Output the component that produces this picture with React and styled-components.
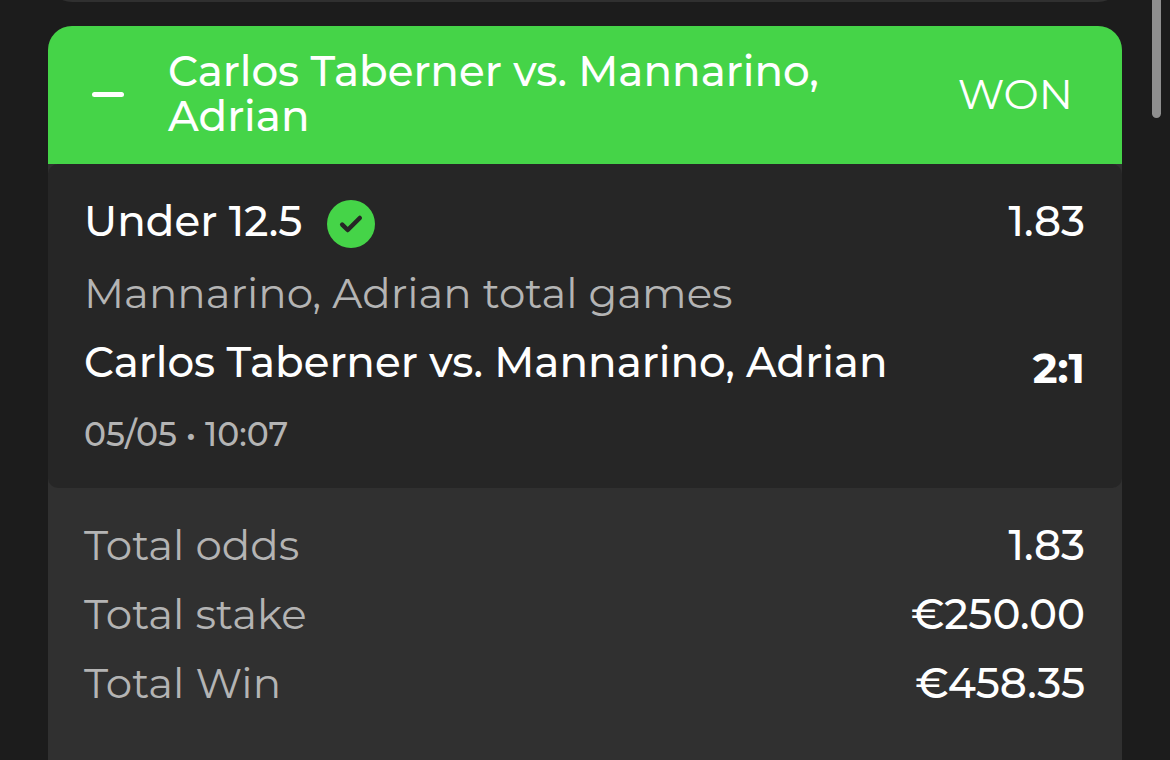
import React from "react";
import styled, { createGlobalStyle } from "styled-components";

const GlobalStyle = createGlobalStyle`
  * { box-sizing: border-box; }
  body {
    margin: 0;
    background: #1c1c1c;
    color: #fff;
    font-family: Montserrat, Inter, sans-serif;
  }
`;

const Screen = styled.main`
  position: relative;
  height: 760px;
  padding: 0 48px;
  overflow: hidden;
  background: #1c1c1c;
`;

const PreviousCard = styled.div`
  height: 24px;
  margin-top: -22px;
  border-radius: 0 0 24px 24px;
  background: #303030;
`;

const Scrollbar = styled.div`
  position: absolute;
  top: -12px;
  right: 9px;
  width: 9px;
  height: 130px;
  border-radius: 5px;
  background: #8f8f8f;
`;

const Card = styled.section`
  width: 1074px;
  height: 760px;
  margin-top: 24px;
  border-radius: 24px 24px 0 0;
  overflow: hidden;
  background: #303030;
`;

const Header = styled.header`
  display: flex;
  align-items: center;
  height: 138px;
  padding: 0 49px 3px 44px;
  background: #45d448;
`;

const Dash = styled.span`
  width: 32px;
  height: 5px;
  margin: 2px 44px 0 0;
  border-radius: 2.5px;
  background: #fff;
`;

const Text = styled.span`
  display: block;
  font-size: ${(p) => p.$size || 42}px;
  font-weight: ${(p) => p.$weight || 500};
  line-height: ${(p) => p.$line || 48}px;
  color: ${(p) => (p.$muted ? "#b4b4b4" : "#fff")};
  white-space: nowrap;
`;

const Title = styled.h1`
  flex: 1;
  margin: 0;
`;

const Selection = styled.div`
  height: 324px;
  padding: 33px 37px 0 36px;
  border-radius: 10px;
  background: #262626;
`;

const Line = styled.div`
  display: flex;
  align-items: flex-start;
  justify-content: space-between;
  margin-top: ${(p) => p.$gap || 0}px;
`;

const Pick = styled.div`
  display: flex;
  gap: 25px;
`;

const Badge = styled.svg`
  width: 48px;
  height: 48px;
  margin-top: 3px;
`;

const Score = styled.div`
  padding-top: 6px;
  margin-bottom: -6px;
`;

const Totals = styled.div`
  padding: 23px 37px 0 36px;
`;

const totals = [
  { label: "Total odds", value: "1.83" },
  { label: "Total stake", value: "€250.00" },
  { label: "Total Win", value: "€458.35" },
];

export default function App() {
  return (
    <Screen>
      <GlobalStyle />
      <PreviousCard />
      <Card>
        <Header>
          <Dash />
          <Title>
            <Text $line={45}>Carlos Taberner vs. Mannarino,</Text>
            <Text $line={45}>Adrian</Text>
          </Title>
          <Text $weight={400}>WON</Text>
        </Header>
        <Selection>
          <Line>
            <Pick>
              <Text>Under 12.5</Text>
              <Badge viewBox="0 0 48 48">
                <circle cx="24" cy="24" r="24" fill="#45d448" />
                <path d="M15.2 24.6 L20.7 30 L32.8 18" fill="none" stroke="#262626" strokeWidth="4.5" strokeLinecap="round" strokeLinejoin="round" />
              </Badge>
            </Pick>
            <Text>1.83</Text>
          </Line>
          <Line $gap={21}>
            <Text $muted $weight={400}>Mannarino, Adrian total games</Text>
          </Line>
          <Line $gap={21}>
            <Text>Carlos Taberner vs. Mannarino, Adrian</Text>
            <Score><Text $weight={700}>2:1</Text></Score>
          </Line>
          <Line $gap={28}>
            <Text $muted $weight={500} $size={33} $line={40}>05/05 • 10:07</Text>
          </Line>
        </Selection>
        <Totals>
          {totals.map((t) => (
            <Line key={t.label}>
              <Text $muted $weight={400} $line={69}>{t.label}</Text>
              <Text $line={69}>{t.value}</Text>
            </Line>
          ))}
        </Totals>
      </Card>
      <Scrollbar />
    </Screen>
  );
}
